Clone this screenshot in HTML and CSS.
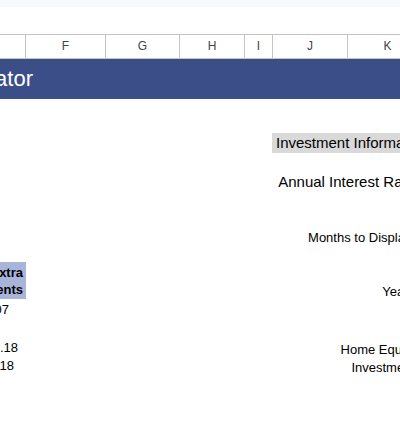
FILE: index.html
```html
<!DOCTYPE html>
<html lang="en">
<head>
    <meta charset="UTF-8">
    <meta name="viewport" content="width=device-width, initial-scale=1.0">
    <title>Home Equity Investment Calculator</title>
    <link rel="stylesheet" href="styles.css">
</head>
<body>
    <div class="app-bar"></div>
    <div class="formula-space"></div>

    <div class="col-headers">
        <div class="col-head col-e"></div>
        <div class="col-head col-f">F</div>
        <div class="col-head col-g">G</div>
        <div class="col-head col-h">H</div>
        <div class="col-head col-i">I</div>
        <div class="col-head col-j">J</div>
        <div class="col-head col-k">K</div>
    </div>

    <div class="title-bar">
        <div class="title-cell"><span>Home Equity Investment Calculator</span></div>
    </div>

    <div class="sheet-body">
        <!-- column E, mostly scrolled off to the left -->
        <div class="col-left">
            <div class="extra-head">
                <span>Extra</span>
                <span>Payments</span>
            </div>
            <div class="num num-first"><span>$1,250.07</span></div>
            <div class="num num-gap"><span>$146,512.18</span></div>
            <div class="num num-last"><span>$98,340.18</span></div>
        </div>

        <div class="col-spacer"></div>

        <!-- columns J:K -->
        <div class="col-right">
            <div class="section-head">Investment Information</div>
            <div class="label label-big">Annual Interest Rate</div>
            <div class="label label-months">Months to Display:</div>
            <div class="label label-years">Years</div>
            <div class="label label-equity">Home Equity</div>
            <div class="label label-invest">Investment</div>
        </div>
    </div>
</body>
</html>
```

FILE: styles.css
```css
* {
    margin: 0;
    padding: 0;
    box-sizing: border-box;
}

html, body {
    overflow: hidden;
}

body {
    width: 400px;
    height: 448px;
    background: #fff;
    font-family: 'Liberation Sans', Arial, sans-serif;
    color: #000;
}

.app-bar {
    height: 7px;
    background: #f8f9fa;
}

.formula-space {
    height: 27px;
}

/* column letters */
.col-headers {
    display: flex;
    width: 428px;
    height: 25px;
    border-top: 1px solid #c4c4c4;
    border-bottom: 1px solid #c4c4c4;
}

.col-head {
    flex: none;
    border-right: 1px solid #c4c4c4;
    text-align: center;
    font-size: 12px;
    line-height: 23px;
    color: #444;
}

.col-e { width: 26px; }
.col-f { width: 80px; }
.col-g { width: 74px; }
.col-h { width: 65px; }
.col-i { width: 28px; }
.col-j { width: 75px; }
.col-k { width: 80px; }

/* title row */
.title-bar {
    height: 40px;
    width: 428px;
    background: #3c4e87;
}

.title-cell {
    display: flex;
    justify-content: flex-end;
    width: 33px;
    height: 40px;
    align-items: center;
    color: #fff;
    font-size: 22px;
    white-space: nowrap;
}

.title-cell span {
    flex: none;
}

/* sheet area */
.sheet-body {
    display: grid;
    grid-template-columns: 26px 246px 156px;
    width: 428px;
}

.col-left {
    display: flex;
    flex-direction: column;
}

.extra-head {
    display: flex;
    flex-direction: column;
    align-items: flex-end;
    margin-top: 163px;
    height: 37px;
    padding: 2px 3px 1px 0;
    background: #a9b4db;
    font-size: 13px;
    font-weight: bold;
    line-height: 17px;
    white-space: nowrap;
}

.extra-head span {
    flex: none;
}

.num {
    display: flex;
    justify-content: flex-end;
    font-size: 13px;
    line-height: 17px;
    white-space: nowrap;
}

.num span {
    flex: none;
}

.num-first {
    margin-top: 2px;
    padding-right: 17px;
}

.num-gap {
    margin-top: 21px;
    padding-right: 8px;
}

.num-last {
    margin-top: 1px;
    padding-right: 12px;
}

.col-right {
    display: flex;
    flex-direction: column;
}

.section-head {
    margin-top: 34px;
    height: 20px;
    padding-left: 4px;
    background: #d9d9d9;
    font-size: 15px;
    line-height: 20px;
    white-space: nowrap;
}

.label {
    text-align: right;
    padding-right: 13px;
    font-size: 13px;
    line-height: 17px;
    white-space: nowrap;
}

.label-big {
    margin-top: 19px;
    font-size: 15px;
    line-height: 20px;
}

.label-months {
    margin-top: 37px;
}

.label-years {
    margin-top: 37px;
}

.label-equity {
    margin-top: 41px;
}

.label-invest {
    margin-top: 1px;
}
```
